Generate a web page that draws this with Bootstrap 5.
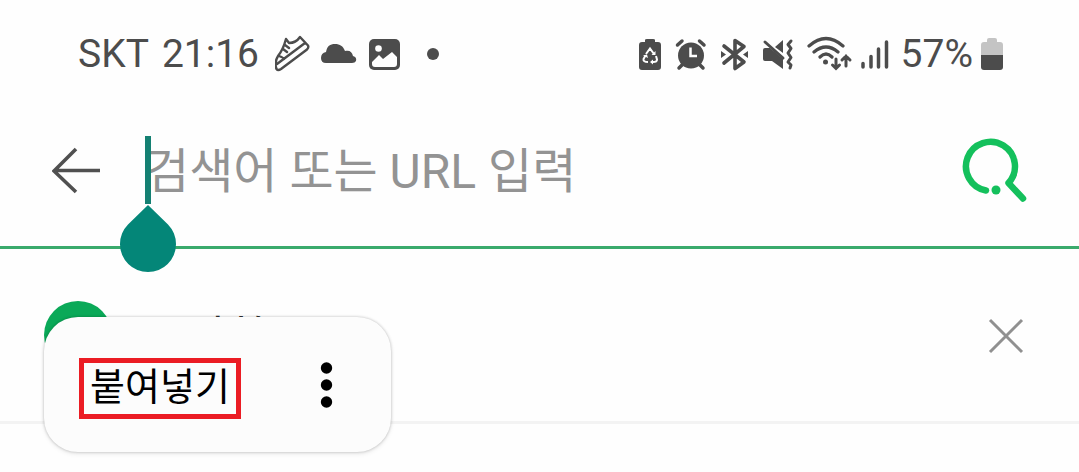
<!DOCTYPE html>
<html lang="ko">
<head>
<meta charset="utf-8">
<meta name="viewport" content="width=device-width, initial-scale=1">
<title>검색</title>
<link href="https://cdn.jsdelivr.net/npm/bootstrap@5.3.0/dist/css/bootstrap.min.css" rel="stylesheet">
<style>
body { background: #fefefe; font-family: Roboto, "Noto Sans CJK KR", sans-serif; min-height: 100vh; }
svg { display: block; flex: none; }
.plain { border: 0; background: none; padding: 0; }
.status-bar { height: 108px; padding: 0 76px 0 78px; color: #4c4c4c; font-size: 39px; line-height: 48px; }
.status-bar .carrier { margin-right: 13px; }
.status-icons { gap: 12px; }
.search-bar { height: 141px; padding: 28px 52px 0; border-bottom: 3px solid #3aaa6c; }
.back, .go { height: 68px; }
.entry { margin: 0 44px; min-width: 0; }
.entry input { display: block; width: 100%; border: 0; outline: 0; padding: 2px 0 0; background: none; font-size: 48px; line-height: 64px; height: 68px; color: #333; }
.entry input::placeholder { color: #939393; opacity: 1; }
.caret { position: absolute; left: 0; top: 0; width: 6px; height: 68px; background: #148072; }
.drop { position: absolute; left: -25px; top: 69px; }
.recent { height: 175px; padding: 0 54px 0 44px; border-bottom: 3px solid #f3f3f3; }
.disc { width: 68px; height: 68px; margin-right: 34px; border-radius: 50%; background: #0aa958; }
.recent-link { font-size: 44px; line-height: 48px; padding-top: 6px; color: #333; }
.paste-menu { position: absolute; left: 44px; top: 68px; width: 347px; height: 135px; border-radius: 34px; background: #fcfcfc; box-shadow: 0 0 3px rgba(0,0,0,.25), 0 2px 5px rgba(0,0,0,.08); padding: 0 58px 0 35px; }
.paste-btn { border: 5px solid #eb1c24; background: none; padding: 0 0 2px; width: 162px; height: 61px; font-size: 38px; line-height: 47px; color: #000; margin-top: 8px; }
</style>
</head>
<body>
<header class="status-bar d-flex align-items-center justify-content-between">
  <div class="d-flex align-items-center">
    <span class="carrier">SKT</span><span>21:16</span>
    <svg class="ms-3" width="36" height="38" viewBox="0 0 36 38" fill="none" stroke="#4c4c4c" stroke-width="2.4" stroke-linejoin="round" stroke-linecap="round"><path d="M1.500 34Q-1 28 3 21Q8 15 11 4L14 8Q21 8 25 2L33 10.500Q34 12.500 32 14.500L6 34Q3 36 1.500 34ZM2 29L30 8M4 21Q9 23 9 24M10 10L14 13M8 14L12 17"/></svg>
    <svg class="ms-2" width="38" height="36" viewBox="0 0 38 36"><path fill="#4c4c4c" d="M7 27Q2 27 2 22 2 17 7 16C8 10 11 8 16 8 21 8 24 10 26 15 31 14 33 16 34 20Q38 21 37 25 36 27 33 27Z"/></svg>
    <svg class="ms-2" width="36" height="36" viewBox="0 0 36 36"><rect x="4" y="3" width="31" height="31" rx="5" fill="#4c4c4c"/><circle cx="13.500" cy="12.500" r="3.300" fill="#fefefe"/><path fill="#fefefe" d="M7 26L14 19 18 23 27 16 32 21V28Q32 31 29 31H10Q7 31 7 28Z"/></svg>
    <svg class="ms-4" width="16" height="36" viewBox="0 0 16 36"><circle cx="8" cy="18" r="6" fill="#4c4c4c"/></svg>
  </div>
  <div class="status-icons d-flex align-items-center">
    <svg width="28" height="36" viewBox="0 0 28 36"><path fill="#4c4c4c" d="M10 6V4Q10 3 12 3H18Q20 3 20 4V6H23Q26 6 26 9V31Q26 34 23 34H7Q4 34 4 31V9Q4 6 7 6Z"/><path d="M11 18L15 12.500 19 18M21 20L22 23.500Q22 26 18 26M13 26Q8 26 8.500 23L10.500 19.500" fill="none" stroke="#fefefe" stroke-width="2"/><path fill="#fefefe" d="M20.500 15V19H16.500ZM18 23.500V28.500L15 26ZM8 19.500L12 18.500 13 22Z"/></svg>
    <svg width="32" height="36" viewBox="0 0 32 36"><circle cx="16" cy="19.500" r="13" fill="#4c4c4c"/><path d="M2.500 9L7 5M29 9L24.500 5M7 29L4 32M25 29L28 32" stroke="#4c4c4c" stroke-width="3.500" stroke-linecap="round"/><path d="M15.500 11.500V20H22" fill="none" stroke="#fefefe" stroke-width="2.500"/></svg>
    <svg width="30" height="36" viewBox="0 0 30 36"><path d="M5 10L25 26 16 32.500V4.500L25 10.500 5 27" fill="none" stroke="#4c4c4c" stroke-width="3.600" stroke-linejoin="round" stroke-linecap="round"/><path d="M2 15L7 18.500 2 22ZM29 15L24 18.500 29 22Z" fill="#4c4c4c"/></svg>
    <svg width="34" height="36" viewBox="0 0 34 36"><path fill="#4c4c4c" d="M2 14Q2 12 4 12H9L22 23V33L11 25H4Q2 25 2 23ZM22 4V17L14 11Z"/><path d="M4 6L22 22" stroke="#4c4c4c" stroke-width="3" stroke-linecap="round"/><path d="M30 5L27 8.500 30 12.500 27 17 30 21.500 27 26 30 29 29 32" fill="none" stroke="#4c4c4c" stroke-width="3" stroke-linecap="round" stroke-linejoin="round"/></svg>
    <div class="d-flex align-items-center gap-2">
      <svg width="46" height="38" viewBox="0 0 46 38" fill="none" stroke="#4c4c4c" stroke-width="3.200" stroke-linecap="round"><path d="M2 11Q19 -4 36 11M7 17Q19 7 31 17M13 22Q19 16 25 22"/><circle cx="18.500" cy="27" r="2.500" fill="#4c4c4c" stroke="none"/><path d="M29 24V33M25.500 30L29 33.500 32.500 30M39 31V21M35 25L39 21 43 25" stroke-width="3"/></svg>
      <svg width="28" height="36" viewBox="0 0 28 36"><path d="M2 27.500V31M10 20.500V31M17.500 13V31M25.500 6V31" stroke="#4c4c4c" stroke-width="3.500" stroke-linecap="round"/></svg>
    </div>
    <div class="d-flex align-items-center gap-2"><span>57%</span>
      <svg width="22" height="36" viewBox="0 0 22 36"><path fill="#c4c4c4" d="M6 6V4Q6 2 8 2H14Q16 2 16 4V6H19Q22 6 22 9V20H0V9Q0 6 3 6Z"/><path fill="#4c4c4c" d="M0 19H22V31Q22 34 19 34H3Q0 34 0 31Z"/></svg>
    </div>
  </div>
</header>
<main>
<section class="search-bar d-flex align-items-start">
  <button class="plain back" aria-label="뒤로"><svg width="49" height="68" viewBox="0 0 49 68"><path d="M24 13L2 35 24 56M3 34.500H48" fill="none" stroke="#505050" stroke-width="3.600"/></svg></button>
  <div class="entry position-relative flex-fill">
    <input type="text" aria-label="검색어" placeholder="검색어 또는 URL 입력">
    <span class="caret"></span>
    <svg class="drop" width="56" height="68" viewBox="0 0 56 68"><path fill="#048678" d="M28 0L48 19.500A28 28 0 1 1 8 19.500Z"/></svg>
  </div>
  <button class="plain go" aria-label="검색"><svg width="66" height="68" viewBox="0 0 66 68"><path d="M25 54.500A24.500 24.500 0 1 1 47.500 47L62 62.500" fill="none" stroke="#14c05c" stroke-width="6.500" stroke-linecap="round" stroke-linejoin="round"/><circle cx="35" cy="54" r="4.500" fill="#14c05c"/></svg></button>
</section>
<section class="recent position-relative d-flex align-items-center">
  <div class="disc"></div>
  <a class="recent-link text-decoration-none" href="#">부산항</a>
  <button class="plain ms-auto" aria-label="삭제"><svg width="38" height="38" viewBox="0 0 38 38"><path d="M3 4L35 36M35 4L3 36" stroke="#909090" stroke-width="3"/></svg></button>
  <div class="paste-menu d-flex align-items-center justify-content-between">
    <button class="paste-btn">붙여넣기</button>
    <button class="plain" aria-label="더보기"><svg width="13" height="48" viewBox="0 0 13 48"><circle cx="6.500" cy="7" r="5.700"/><circle cx="6.500" cy="24" r="5.700"/><circle cx="6.500" cy="41" r="5.700"/></svg></button>
  </div>
</section>
</main>
<script src="https://cdn.jsdelivr.net/npm/bootstrap@5.3.0/dist/js/bootstrap.bundle.min.js"></script>
</body>
</html>
